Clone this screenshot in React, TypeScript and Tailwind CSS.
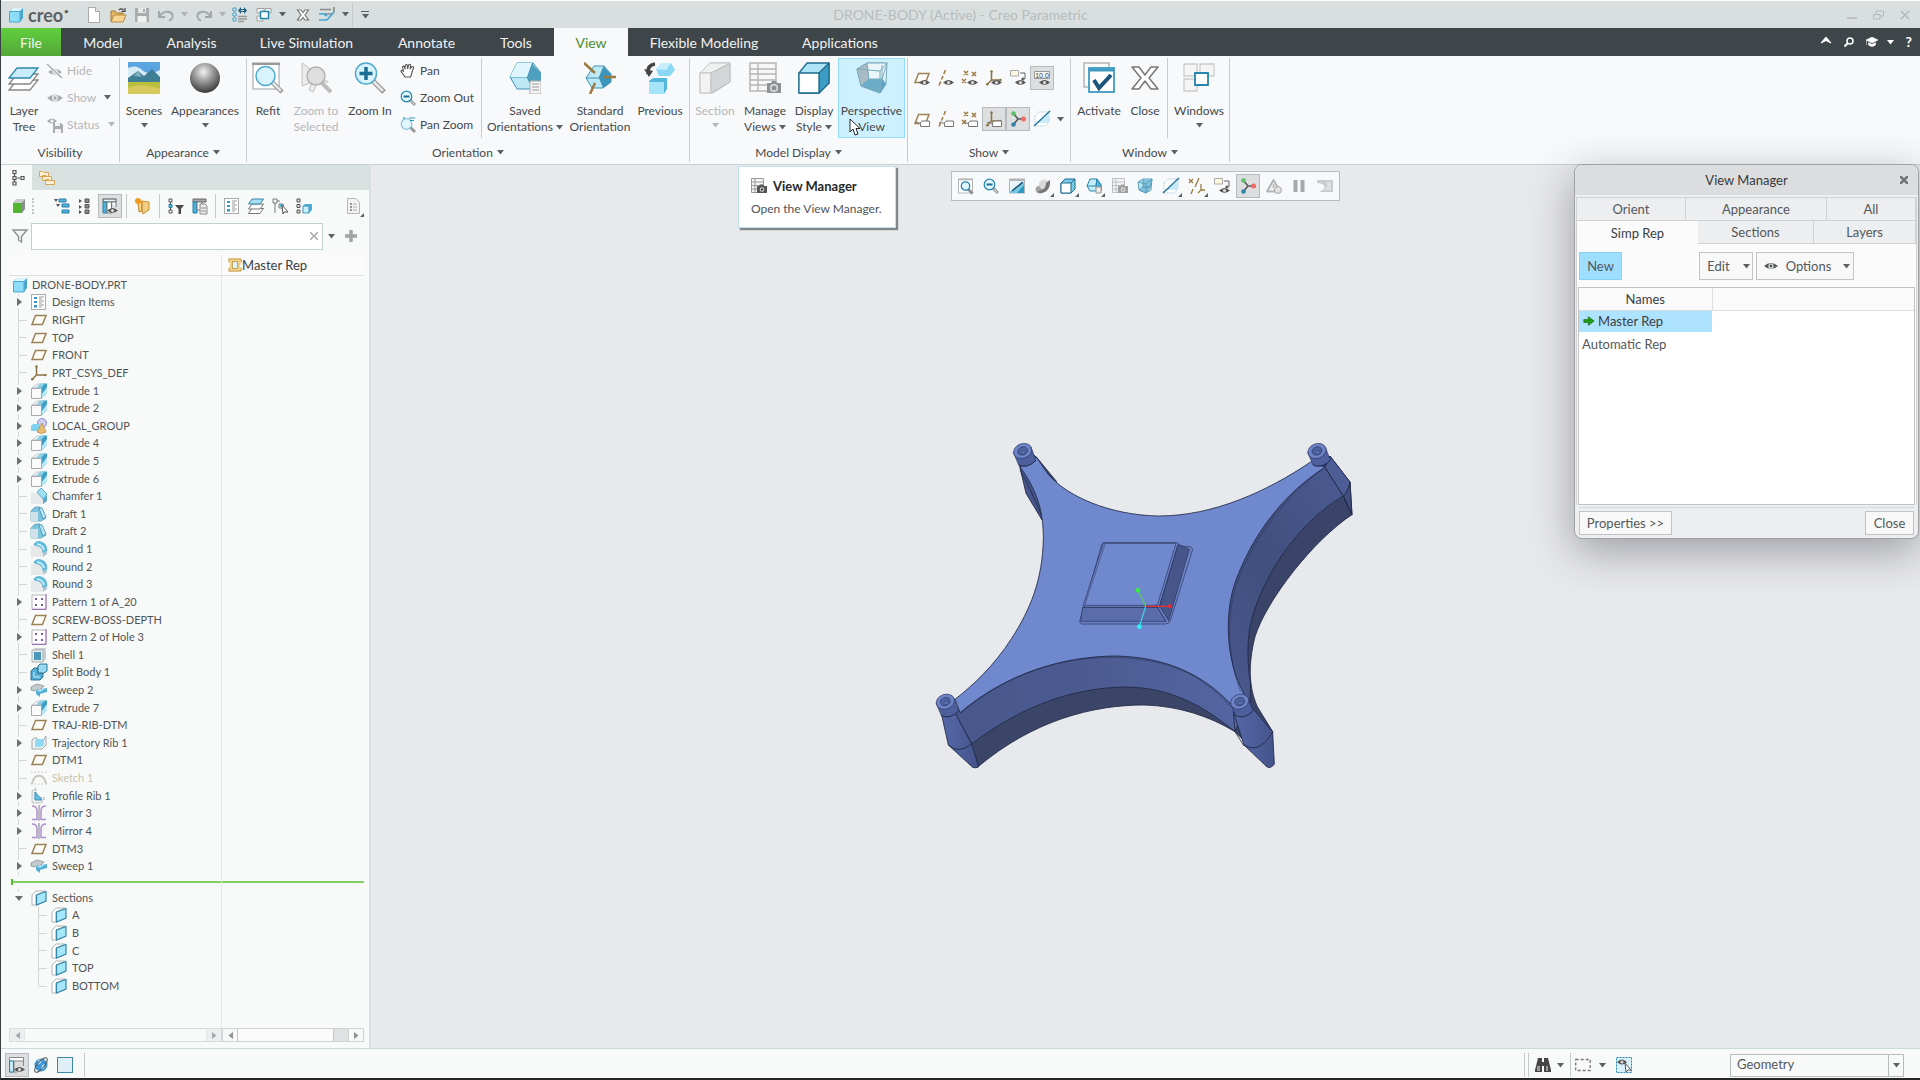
import React, { useState } from 'react';

const small: Record<string, React.ReactNode> = {
  eye: <g><path d="M0 8Q8 1 16 8Q8 15 0 8Z" fill="currentColor" /><circle cx="8" cy="8" r="3" fill="#eceded" /><circle cx="8" cy="8" r="1.7" fill="currentColor" /></g>,
  eyeOff: <g><path d="M1 9Q8 3 15 9Q8 15 1 9Z" fill="currentColor" /><circle cx="8" cy="9" r="2.6" fill="#eceded" /><circle cx="8" cy="9" r="1.5" fill="currentColor" /><path d="M0 1L15 15" stroke="#f8f9fb" strokeWidth="3" /><path d="M0 1L15 15" stroke="currentColor" strokeWidth="1.4" /></g>,
  status: <g><path d="M0 4Q5 -1 10 4Q5 9 0 4Z" fill="currentColor" /><circle cx="5" cy="4" r="1.6" fill="#f4f4f4" /><path d="M6 6H14L16 8V16H6Z" fill="currentColor" /><path d="M8 6H13V9H8ZM8 12H14V16H8Z" fill="#f2f2f2" /></g>,
  hand: <g fill="#fff" stroke="#555" strokeWidth="1.1" strokeLinejoin="round"><path d="M5 14C4 12 2 10 1 8.5C1 7 2.500 7 3.500 8.500L2.500 4C3 2.600 4.200 3 4.500 4.200L5 6L5.300 2.300C6 1 7.300 1.300 7.300 2.600L7.600 5.600L8.800 1.800C9.800 1 10.800 1.600 10.600 2.900L10 6L12 3.600C13 3.200 13.900 4 13.400 5.200L12 9C12 11 11 12 10.500 14Z" /></g>,
  zoomOut: <g><path d="M10 10L15 15" stroke="#999" strokeWidth="3" /><path d="M10 10L14.500 14.500" stroke="#e4e4e4" strokeWidth="1" /><circle cx="6.500" cy="6.500" r="5.300" fill="#e2f5fc" stroke="#2486ad" strokeWidth="1.200" /><path d="M3.500 6.500H9.500" stroke="#1b6c92" strokeWidth="2" /></g>,
  panZoom: <g><path d="M10 10L15 15" stroke="#999" strokeWidth="3" /><circle cx="6.500" cy="7" r="5.300" fill="#e2f5fc" stroke="#8bc3da" strokeWidth="1.200" /><path d="M9 1H15M10 3.500H14M4 0V2" stroke="#2596c4" strokeWidth="1.200" /></g>,
  refit: <g><rect x="0.500" y="1" width="14" height="14" fill="#fff" stroke="#b4b7b9" /><path d="M0 1.500H15" stroke="#b4b7b9" strokeWidth="1.500" /><path d="M10 11L14.500 15.500" stroke="#888" strokeWidth="2.600" /><circle cx="7.500" cy="8" r="4.200" fill="#e2f5fc" stroke="#2486ad" strokeWidth="1.300" /></g>,
  newDoc: <g><path d="M2.500 0.500H9.500L13.500 4.500V15.500H2.500Z" fill="#fff" stroke="#a9a9a9" /><path d="M9.500 0.500V4.500H13.500" fill="#e6e6e6" stroke="#a9a9a9" /></g>,
  open: <g><path d="M1 14V4H5L6.500 6H13V14Z" fill="#e3b566" stroke="#a97a2b" /><path d="M1 15L4 8H16L13 15Z" fill="#f6d493" stroke="#b98a3c" /><path d="M9 3C11 1 13 2 13.500 3.500M15 1V4.500H11.500" fill="none" stroke="#444" strokeWidth="1.200" /></g>,
  save: <g><path d="M1 1H15V15H1Z" fill="#a9acac" /><path d="M4 1H12V6H4Z" fill="#e6e8e8" /><path d="M3.500 9H12.500V15H3.500Z" fill="#eff0f0" /><path d="M9 2H11V5H9Z" fill="#a9acac" /></g>,
  undo: <path d="M1 4V10H7M1.500 9.500C5 3.500 13 3.500 14.500 8C15 11 13 13 11 13.500" fill="none" stroke="#a4a8a8" strokeWidth="2" />,
  redo: <path d="M15 4V10H9M14.500 9.500C11 3.500 3 3.500 1.500 8C1 11 3 13 5 13.500" fill="none" stroke="#a4a8a8" strokeWidth="2" />,
  regen: <g><path d="M1 1H4V4H1ZM1 6H4V9H1ZM1 11H4V14H1Z" fill="#e4f5fb" stroke="#3c9cc3" /><path d="M6 9.500H15M6 12H15M6 14.500H12" stroke="#9a9c9c" strokeWidth="1.400" /><path d="M6 3.500L9 0V7ZM15 3.500L12 0V7Z" fill="#24607f" /><path d="M9 2.500H12M9 4.500H12" stroke="#24607f" /></g>,
  windows: <g><path d="M1 1.500H8V6H1ZM9 1.500H15V6H9ZM1 9H7V14H1Z" fill="#f2f4f4" stroke="#9ea2a2" /><rect x="4.500" y="4.500" width="8" height="7" fill="#fff" stroke="#2486ad" strokeWidth="1.500" /></g>,
  closeX: <path d="M2.500 3H6L8 5.500L10 3H13.500L10 8L13.500 13H10L8 10.500L6 13H2.500L6 8Z" fill="#fff" stroke="#777" strokeWidth="1.200" />,
  settings: <g><path d="M1 2.500H12M5 7H14" stroke="#888" strokeWidth="1.600" /><path d="M0 7H5L8 9M0 13H8L15 5" fill="none" stroke="#3fa7dc" strokeWidth="1.700" /><path d="M15 0V5" stroke="#888" strokeWidth="1.600" /></g>,
  plane: <path d="M4.500 3.500H15L11.500 12.500H1Z" fill="#fdfcf8" stroke="#9b8256" strokeWidth="1.500" />,
  axisDash: <path d="M7.500 0L5.800 4M5 6L3.500 9.500M2.700 11.500L1 15.500" stroke="#9b7a3c" strokeWidth="1.500" />,
  points: <path d="M2 1L6 5M6 1L2 5M10 2L14 6M14 2L10 6M0 9L4 13M4 9L0 13" stroke="#9b7a3c" strokeWidth="1.500" />,
  csys: <g><path d="M5.500 1V10H15M5.500 10L1 14.500" fill="none" stroke="#8b7146" strokeWidth="1.500" /><circle cx="5.500" cy="1.500" r="1.200" fill="#8b7146" /><circle cx="14.500" cy="10" r="1.200" fill="#8b7146" /><circle cx="1.300" cy="14.300" r="1.300" fill="#8b7146" /></g>,
  note: <g><path d="M0.500 0.500H8.500V6H0.500Z" fill="#fff7de" stroke="#a9a9a9" /><path d="M10 3H15V9L12 9" fill="none" stroke="#666" /><path d="M13.500 7L11 9L13.500 11Z" fill="#444" /></g>,
  dim: <g><path d="M0.500 1.500H15.500V8.500H0.500Z" fill="#f4f4f4" stroke="#999" /></g>,
  rotor: <g stroke="#555" strokeWidth="1.500"><path d="M3.500 2.500L8 8L3.500 13.500M8 8H13" fill="none" /><circle cx="3.500" cy="2.500" r="2.300" fill="#5cc067" stroke="none" /><circle cx="3.500" cy="13.500" r="2.300" fill="#2f83ad" stroke="none" /><circle cx="13.500" cy="8" r="2.500" fill="#f26964" stroke="none" /></g>,
  sectionCut: <g><path d="M1 5L5 1H15V11L11 15H1Z" fill="#fff" stroke="#a9cfdf" strokeDasharray="1.500 1" /><path d="M3 12H15V3Z" fill="#c8e9f6" /><path d="M0 15L16 0" stroke="#2678a0" strokeWidth="1.500" /></g>,
  shade: <g><rect x="0.500" y="1" width="15" height="14" fill="#e8f6fc" stroke="#b2b6b8" /><path d="M1 15V13C6 13 11 8 11 5H15V15Z" fill="#7cc7e4" /><path d="M8 15L15 7V15Z" fill="#2b9ac6" /><path d="M0 2H16" stroke="#b2b6b8" strokeWidth="2" /><path d="M3 13L14 4" stroke="#124e6b" strokeWidth="1.600" /></g>,
  spheres: <g><ellipse cx="5" cy="11.500" rx="4.500" ry="4" fill="#a2a2a2" /><circle cx="9" cy="6.500" r="5" fill="#dadada" /><path d="M3 13C8 13 11 10 11 5L15 2C16 10 11 16 4 15Z" fill="#747474" /></g>,
  box: <g stroke="#1d6a8d" strokeLinejoin="round"><path d="M1 5L5 1H15V11L11 15H1Z" fill="#7ccbe8" /><path d="M1 5H11V15H1Z" fill="#fff" /><path d="M11 5L15 1" /></g>,
  houseBox: <g stroke="#2486ad" strokeLinejoin="round"><path d="M4 1H11L15 7V13H4L1 8Z" fill="#c5ebf8" /><path d="M1 8H10L11 1" fill="none" /><path d="M11 1L15 7V13H11L10 8Z" fill="#5ab4d8" /><path d="M10 9H15V15H10Z" fill="#eee" stroke="#999" /></g>,
  viewMgr: <g><path d="M0.500 0.500H12.500V14.500H0.500Z" fill="#f6f6f6" stroke="#999" /><path d="M0 4H13M0 7.500H13M0 11H13M4 0V15" stroke="#999" /><path d="M6 8H8L9 6.500H12L13 8H16V15H6Z" fill="#555" /><circle cx="11" cy="11.500" r="2.200" fill="#ddd" /><circle cx="11" cy="11.500" r="1.200" fill="#444" /></g>,
  viewMgrPale: <g><path d="M0.500 0.500H12.500V14.500H0.500Z" fill="#f6f6f6" stroke="#bdbfc1" /><path d="M0 4H13M0 7.500H13M0 11H13M4 0V15" stroke="#bdbfc1" /><path d="M6 8H8L9 6.500H12L13 8H16V15H6Z" fill="#9ea0a2" /><circle cx="11" cy="11.500" r="2.200" fill="#e6e6e6" /><circle cx="11" cy="11.500" r="1.200" fill="#9ea0a2" /></g>,
  persp: <g stroke="#5b9fba" strokeLinejoin="round"><path d="M1 4L6 1H15L14 12L9 15L2 12Z" fill="#bfe5f3" /><path d="M6 1V9H13L15 1M6 9L2 12L9 15L13 9Z" fill="#7fc3dd" /><path d="M1 4L9 6V15M9 6L15 1" fill="none" /></g>,
  datums: <g fill="none" stroke="#9b7a3c" strokeWidth="1.300"><path d="M0 1L4 5M4 1L0 5M10 0L6 9M4 11L2 16M12 6V12H16M12 12L9 15" /></g>,
  warn: <g><path d="M7.500 2L14 13.500H1Z" fill="#eee" stroke="#b3b5b6" strokeWidth="2" strokeLinejoin="round" /><path d="M7.500 6V10" stroke="#b3b5b6" strokeWidth="1.500" /><circle cx="12" cy="12" r="3.500" fill="#e2e2e2" stroke="#a3a5a6" /></g>,
  pause: <path d="M2.500 2H6.500V14H2.500ZM9.500 2H13.500V14H9.500Z" fill="#a6a9aa" />,
  spin: <g><path d="M0 2H16V14H2L7 11C9 8 6 5 0 5Z" fill="#c9cbcc" /><path d="M9 4H14V12H7Q12 8 9 4Z" fill="#e0e1e2" /></g>,
  treeTab: <g fill="none" stroke="#555" strokeWidth="1.200"><path d="M3 0.500H6V3.500H3ZM3 6.500H6V9.500H3ZM3 12H6V15H3ZM11 6.500H14V9.500H11ZM4.500 4V6M4.500 10V12M7 8H10" /></g>,
  folders: <g fill="#fdf0d4" stroke="#d5a558"><path d="M0.500 1.500H4L5 2.500H9.500V6.500H0.500ZM3.500 5.500H7L8 6.500H12.500V10.500H3.500ZM6.500 9.500H10L11 10.500H15.500V14.500H6.500Z" /></g>,
  greenCube: <g><path d="M2 5L6 1H14V11L11 15V5Z" fill="#8a8f92" /><path d="M2 5H11V15H2Z" fill="#56b530" /><path d="M6 1H14L11 5H2Z" fill="#c9cccd" /></g>,
  collapse: <g><path d="M0 1H4L2 4ZM2 6H6L4 9Z" fill="#555" /><path d="M5 1H12V4H5ZM8 6H15V9H8ZM8 12H15V15H8Z" fill="#52b2dc" stroke="#2a7fa5" /></g>,
  expandList: <g><path d="M1 1L4 3L1 5ZM1 7L4 9L1 11ZM1 12L4 14L1 16Z" fill="#555" /><path d="M7 1H11V4.500H7ZM7 6.500H11V10H7ZM7 12H11V15.500H7Z" fill="#888" stroke="#555" /></g>,
  columns: <g><path d="M1 1H14V4H1Z" fill="#dff3fb" stroke="#555" /><path d="M1 4H5V15H1Z" fill="#4bb2dd" stroke="#2a7fa5" /><path d="M5 4H9.500V15H5ZM9.500 4H14V9" fill="#fff" stroke="#777" /></g>,
  newPart: <g><path d="M3 5L7 3V13L4 14ZM7 3L14 4V12L8 16L7 13Z" fill="#f3cd83" stroke="#c28e36" /><circle cx="3" cy="3" r="3" fill="#f39a1c" /></g>,
  treeFilter: <g><path d="M1 1H4V4H1ZM1 12H4V15H1ZM2.500 4V12" fill="none" stroke="#555" /><path d="M1 6.500H4V9.500H1Z" fill="#52b2dc" stroke="#2a7fa5" /><path d="M7 7H16L13 11V16H10.500V11Z" fill="#4a4a4a" /></g>,
  colPage: <g><path d="M1 1H14V4H1Z" fill="#aaa" stroke="#666" /><path d="M1 4H5V15H1Z" fill="#4bb2dd" stroke="#2a7fa5" /><path d="M5 4H10V12H5Z" fill="#fff" stroke="#777" /><path d="M8 6H13L15 8V16H8Z" fill="#eee" stroke="#888" /><path d="M9 10H14M9 13H14" stroke="#888" /></g>,
  design: <g><rect x="0.500" y="0.500" width="14" height="15" fill="#fff" stroke="#a9acae" /><path d="M3 3H6V5H3ZM3 7H6V9H3ZM3 11H6V13.500H3Z" fill="#3498cb" /><path d="M8 3H13M8 5H11M8 7H13M8 9H11M8 11H13M8 13H11" stroke="#999" /></g>,
  layers: <g fill="#fff" stroke="#777"><path d="M4 10.500H15.500L12 15.500H0.500Z" /><path d="M4 6H15.500L12 11H0.500Z" /><path d="M4 1H15.500L12 6H0.500Z" fill="#a9def2" stroke="#3586a8" /></g>,
  treeCursor: <g><path d="M1 1H5V5H1ZM3 5V15M5 3H8M7 6H11V10H7Z" fill="none" stroke="#777" /><path d="M8 6H12V9H8Z" fill="#52b2dc" /><path d="M10 7L16 14H12L11 16Z" fill="#fff" stroke="#555" /></g>,
  treeBox: <g><path d="M1 1H4V4H1ZM1 6.500H4V9.500H1ZM1 12H4V15H1Z" fill="#ddd" stroke="#555" /><path d="M7 8L9 6H16V12L13 15H7Z" fill="#49aedb" /><path d="M7 8H13V15H7Z" fill="#c9effc" stroke="#3b95bb" /></g>,
  page: <g><path d="M2.500 0.500H10.500L14.500 4V15.500H2.500Z" fill="#f3f3f3" stroke="#b5b8b9" /><path d="M5 6H7M5 9H7M5 12H7" stroke="#999" strokeWidth="2" /><path d="M8 6H12M8 9H12M8 12H12" stroke="#b0b0b0" /></g>,
  funnel: <path d="M1 2H15L9.500 8.500V14L6.500 12V8.500Z" fill="#f3f4f4" stroke="#8d9192" strokeWidth="1.400" />,
  rep: <g><path d="M1 1H15V15H1Z" fill="#f3d28a" stroke="#bf933f" /><path d="M5 4H11V12H5Z" fill="#dff4fc" stroke="#bf933f" /><path d="M0 5H2V11H0ZM14 5H16V11H14Z" fill="#fff" /></g>,
  part: <g><path d="M2 4L5 1H15V11L12 15H2Z" fill="#49a6cf" /><path d="M2 4L5 1H15L12 4Z" fill="#daf5fd" /><path d="M1.500 4.500H12V15H1.500Z" fill="#8ddcf8" stroke="#4ea9cd" /></g>,
  extrude: <g><path d="M1 5L6 1H10L8 5Z" fill="#eef0f1" stroke="#b5b8ba" strokeWidth="0.700" /><path d="M8 5L11 0.500H16V10L11 15V6Z" fill="#3f9ec6" /><path d="M5 5L9 0.500H14L10 5Z" fill="#8fcfe7" /><path d="M11 15L16 10V4L11 11Z" fill="#b8e7f6" /><path d="M0.500 5.500H10.500V15.500H0.500Z" fill="#fafafa" stroke="#a8abad" /></g>,
  group: <g><circle cx="11" cy="5" r="4.500" fill="#cfcff2" stroke="#8d8ccb" /><path d="M0 8L2 6H9V13H0Z" fill="#7fd3f2" /><path d="M11 5L15 14Q10.500 17 6 14Z" fill="#e9bd74" stroke="#b78a45" strokeWidth="0.700" /></g>,
  chamfer: <g><path d="M0 5H7L12 11V16H0Z" fill="#e6e8e9" /><path d="M6 4L10 0L16 6L12 11Z" fill="#9fe0f7" stroke="#3fa0c5" strokeWidth="0.800" /><path d="M12 11L16 7V13L12 16Z" fill="#5aa9c7" /></g>,
  draft: <g><path d="M0 5L4 1H9L15 12L10 15H0Z" fill="#7ec4df" stroke="#589fb9" strokeWidth="0.800" /><path d="M0 6H7V15H0Z" fill="#cfe2ea" /><path d="M8 2L11 2L15 11L12 13Z" fill="#bceaf9" stroke="#3a8eb0" strokeWidth="0.800" /></g>,
  round: <g><path d="M0 5H6Q12 7 12 13V16H0Z" fill="#e6e8e9" /><path d="M3 3Q5 0 8 0.500Q16 1 16 10L12 12Q12 5 3 4Z" fill="#62bfe2" stroke="#4a9cba" strokeWidth="0.600" /><path d="M6 3Q12 4 13 9" stroke="#d7f3fc" strokeWidth="1.500" fill="none" /><path d="M12 12L16 10V13L12 16Z" fill="#a9c6d2" /></g>,
  pattern: <g><path d="M1 1H15V15H1Z" fill="#fff" stroke="#b5b5bd" /><path d="M15 0V15.500H1" fill="none" stroke="#9a6cc0" /><path d="M4 4H6V6H4ZM10 4H12V6H10ZM4 10H6V12H4ZM10 10H12V12H10Z" fill="#8556b0" /></g>,
  shell: <g><path d="M1 4L4 1H15V12L12 15H1Z" fill="#c6ced1" /><path d="M1 3H12V15H1Z" fill="#e9ecee" stroke="#aab0b3" /><path d="M3 5H10V13H3Z" fill="#4a99ba" /></g>,
  split: <g stroke="#206a8c" strokeWidth="0.900"><path d="M0 7L3 4H7V9H12V13L9 16H0Z" fill="#53aed4" /><path d="M7 2L9 0H16V7L13 9H7Z" fill="#98d8f0" /><path d="M3 8V13H9" fill="none" stroke="#d6f2fb" /></g>,
  sweep: <g><path d="M0 5L6 2L13 4L10 7L3 9L0 8Z" fill="#c3c9cc" stroke="#888f92" strokeWidth="0.800" /><path d="M5 8L16 6V10L9 12V15L5 12Z" fill="#57b0d4" /><path d="M5 8L15 6L9 10Z" fill="#a8ddf0" /></g>,
  trib: <g><path d="M1 5L4 3H6V8L10 6H12L15 1V10L11 14H1Z" fill="#f3f4f4" stroke="#a2a5a7" /><path d="M4 6L6 4H13V10L10 12H4Z" fill="#8fdaf4" /></g>,
  sketch: <g stroke="#c0c3c4" fill="none"><path d="M1 14C3 3 13 3 15 14" strokeWidth="2" stroke="#c6c6bb" /><path d="M0 2H16M0 14H16" strokeDasharray="1.500 2" /></g>,
  prib: <g><path d="M1 3L5 0V9L14 10L10 15H1Z" fill="#eceeee" stroke="#adb0b2" strokeDasharray="2 1" /><path d="M4 4L11 12H4Z" fill="#62bfe5" stroke="#3893b8" /></g>,
  mirror: <g fill="none"><path d="M1 1Q6 1 6 6V14.500H1M15 1Q10 1 10 6V14.500H15" stroke="#b18dd0" strokeWidth="1.500" /><path d="M8 0V16" stroke="#b9bcbe" strokeWidth="2" /></g>,
  section: <g><path d="M1 5L5 1H14L5 5V15H1Z" fill="#fff" stroke="#a9abad" strokeWidth="0.900" /><path d="M5.500 5L15 1.500V11L5.500 15Z" fill="#a5e6fb" stroke="#3787a6" strokeWidth="1.200" /></g>,
  layoutBtn: <g><path d="M0.500 0.500H14.500V4H0.500ZM0.500 4V15H5V4M5 15H8M14.500 4V9" fill="#fff" stroke="#888" /><path d="M0.500 4H4.500V15H0.500Z" fill="#c6eaf8" stroke="#2486ad" /></g>,
  globe: <g><circle cx="8" cy="8" r="6.500" fill="#3c95d6" /><path d="M5 3L9 2L8 6L5 8ZM9 8L13 7L11 12L8 13Z" fill="#a9dcf6" /><ellipse cx="8" cy="8" rx="9" ry="3.500" transform="rotate(-50 8 8)" fill="none" stroke="#555" /></g>,
  blank: <rect x="0.500" y="0.500" width="15" height="15" fill="#e0eef5" stroke="#3d87a7" />,
  find: <g fill="#454545"><path d="M3 1H7V5H9V1H13L16 13V15H9V9H7V15H0V13Z" /><path d="M2 9H5V14H2ZM11 9H13V14H11Z" fill="#999" /></g>,
  marquee: <rect x="0.700" y="2.500" width="14.500" height="11" fill="none" stroke="#777" strokeWidth="1.300" strokeDasharray="3 2" />,
  pick: <g><rect x="0.500" y="0.500" width="15" height="15" fill="#d9f1fa" stroke="#2486ad" strokeDasharray="2 1" /><path d="M1 5Q6 0 11 5Q6 10 1 5Z" fill="#555" /><circle cx="6" cy="5" r="1.500" fill="#ddd" /><path d="M9 6L15 13H12L10 15Z" fill="#fff" stroke="#555" /></g>,
  arrow: <path d="M1 6H7V2L15 8L7 14V10H1Z" fill="#1f9a18" stroke="#1d5c10" strokeWidth="0.700" />,
};

const miniEye = <g><path d="M5 12.500Q10.500 7.500 16 12.500Q10.500 17 5 12.500Z" fill="#555" /><circle cx="10.500" cy="12.500" r="1.600" fill="#ddd" /></g>;
const miniTag = <g fill="#fff" stroke="#777"><path d="M1 12Q3 10 5 12T8 12" fill="none" /><path d="M8 10H15.500V15.500H6.500V12Z" /></g>;

function Icon({ name, badge, className = "w-4 h-4" }: { name: string; badge?: 'eye' | 'tag'; className?: string }) {
  return (
    <svg viewBox="0 0 16 16" className={`${className} shrink-0 overflow-visible`} aria-hidden="true">
      {small[name]}
      {name === "dim" && <text x="8" y="7.500" fontSize="7" textAnchor="middle" fontFamily="Liberation Sans" fill="#444">10.0</text>}
      {badge === 'eye' && miniEye}
      {badge === 'tag' && miniTag}
    </svg>
  );
}

const large: Record<string, React.ReactNode> = {
  layerTree: <g fill="#fff" stroke="#888" strokeWidth="1.300"><path d="M9 18H30L22 28H1Z" /><path d="M9 12H30L22 22H1Z" /><path d="M9 6H30L22 16H1Z" fill="#c9ecf9" stroke="#3089ae" /></g>,
  scenes: <g><path d="M0 0H32V32H0Z" fill="#5aa5e0" /><path d="M0 6Q8 2 14 8T32 8V20H0Z" fill="#d8ecf6" /><path d="M0 16L10 9L16 14L24 7L32 15V21H0Z" fill="#3f7f95" /><path d="M6 14L10 9L14 15Z" fill="#7fb0c0" /><path d="M0 20H32V32H0Z" fill="#b9bf3c" /><path d="M0 26Q12 20 32 27V32H0Z" fill="#d8c95e" /></g>,
  ball: <circle cx="16" cy="16" r="15" fill="url(#ballShade)" />,
  refit: <g><rect x="1" y="1" width="26" height="26" fill="#fff" stroke="#b0b3b5" strokeWidth="1.300" /><path d="M0 2H28" stroke="#999" strokeWidth="2" /><path d="M19 19L30 30" stroke="#8e8e8e" strokeWidth="4.500" /><path d="M20 20L29 29" stroke="#e6e6e6" strokeWidth="2.500" /><circle cx="13.500" cy="14" r="9.500" fill="#d8f3fd" stroke="#4da9cd" strokeWidth="1.500" /></g>,
  zoomSel: <g><path d="M2 1L28 20H18L13 30L9 28L12 20L2 24Z" fill="#ebebeb" stroke="#c2c2c2" /><path d="M21 20L31 30" stroke="#bdbdbd" strokeWidth="4" /><circle cx="16" cy="14" r="9" fill="#dedede" stroke="#b3b3b3" strokeWidth="1.500" /></g>,
  zoomIn: <g><path d="M19 19L30 30" stroke="#8e8e8e" strokeWidth="5" /><path d="M19 19L29 29" stroke="#e6e6e6" strokeWidth="3" /><circle cx="12" cy="11.500" r="10.500" fill="#d8f3fd" stroke="#4da9cd" strokeWidth="1.400" /><path d="M12 5V18M5.500 11.500H18.500" stroke="#1a6d94" strokeWidth="3.500" /></g>,
  saved: <g strokeLinejoin="round"><path d="M1 15L8 1H24L32 11V22L24 27H8Z" fill="#bde8f6" stroke="#3e92b3" /><path d="M22 1L32 11V22L24 27L18 15Z" fill="#4f9fc0" /><path d="M1 15H18L24 1M18 15L24 27" fill="none" stroke="#3e92b3" /><path d="M1 15L8 1H23L18 15Z" fill="#e0f6fd" /><path d="M21 19H32V32H21Z" fill="#f4f4f4" stroke="#aaa" /><path d="M23 22H30M23 25H30M23 28H30" stroke="#999" /></g>,
  standard: <g strokeLinejoin="round"><path d="M2 16L10 4H20L27 12V20L19 26H8Z" fill="#bde8f6" stroke="#3e92b3" /><path d="M20 5L27 12V20L19 26L15 16Z" fill="#3c95bd" /><path d="M2 16H15L20 4" fill="none" stroke="#3e92b3" /><path d="M0 1L11 11M20 15H32M11 21L6 32" stroke="#9b7a3c" strokeWidth="2.500" /></g>,
  previous: <g><path d="M12 7L17 1H27L31 8L26 14H15Z" fill="#8bd8f5" /><path d="M12 7L17 1H27L22 8Z" fill="#c9eefb" /><path d="M5 19L9 16H23V27L20 32H5Z" fill="#55b7de" /><path d="M5 20H20V32H5Z" fill="#a5e4f9" /><path d="M11 2Q3 3 4 12" fill="none" stroke="#444" strokeWidth="3.500" /><path d="M0 7L5 15L9 9Z" fill="#444" /></g>,
  sectionBig: <g stroke="#c0c2c4" strokeLinejoin="round"><path d="M1 11L11 1H31V20L14 31H1Z" fill="#dadbdc" /><path d="M1 11L11 1H31L12 11Z" fill="#f0f1f1" /><path d="M1 11H12V31H1Z" fill="#f2f2f2" /><path d="M12 11L31 2V20L12 31Z" fill="#d4d5d6" /></g>,
  manage: <g><path d="M1 1H27V29H1Z" fill="#f7f7f7" stroke="#b5b5b5" strokeWidth="1.500" /><path d="M1 7H27M1 12H27M1 18H27M1 23H27M9 1V29" stroke="#b5b5b5" strokeWidth="1.400" /><path d="M18 21H22L23 19H27L28 21H32V31H18Z" fill="#8f9294" /><circle cx="25" cy="26" r="4" fill="#ddd" /><circle cx="25" cy="26" r="2.500" fill="#8f9294" /></g>,
  display: <g stroke="#1d6a8d" strokeWidth="1.300" strokeLinejoin="round"><path d="M1 11L9 1H31V21L21 31H1Z" fill="#aee3f6" /><path d="M21 11L31 1V21L21 31Z" fill="#3c9cc3" /><path d="M1 11H21V31H1Z" fill="#fff" /></g>,
  perspBig: <g strokeLinejoin="round" stroke="#78aabd"><path d="M1 7L11 1H31L30 22L24 31L5 24Z" fill="#dff0f6" /><path d="M11 1L13 17L5 24L1 7Z" fill="#a9bcc4" /><path d="M13 17H26L24 31L5 24Z" fill="#69aecb" /><path d="M26 17L30 22L24 31Z" fill="#5ba6c5" /><path d="M11 1H31L26 17H13Z" fill="#eaf6fa" /><path d="M31 1L24 9V31M1 7L24 9M26 3V17M15 18L10 26M19 18L15 28M22 18L20 29" fill="none" /></g>,
  activate: <g><rect x="1" y="1" width="25" height="24" fill="#fafafa" stroke="#b5b5b5" strokeWidth="1.500" /><rect x="6" y="6" width="25" height="24" fill="#fff" stroke="#3d9ac1" strokeWidth="1.800" /><path d="M6 8H31" stroke="#3d9ac1" strokeWidth="3" /><path d="M11 18L16 26L28 13" fill="none" stroke="#19557a" strokeWidth="4" /></g>,
  closeBig: <path d="M3 5H10L16 13L22 5H29L20 16L29 27H22L16 19L10 27H3L12 16Z" fill="#fff" stroke="#777" strokeWidth="1.500" strokeLinejoin="round" />,
  windowsBig: <g fill="#f5f5f6" stroke="#c9cbcd" strokeWidth="1.300"><path d="M1 2H14V14H1ZM17 2H31V14H17ZM1 17H14V29H1Z" /><path d="M12 11H25V23H12Z" fill="#fff" stroke="#2486ad" strokeWidth="1.800" /></g>,
};

function BigIcon({ name }: { name: string }) {
  return (
    <svg viewBox="0 0 32 32" className="w-8 h-8 shrink-0" aria-hidden="true">
      <defs>
        <radialGradient id="ballShade" cx="0.45" cy="0.3" r="0.7">
          <stop offset="0" stopColor="#f4f4f4" />
          <stop offset="0.45" stopColor="#9a9a9a" />
          <stop offset="1" stopColor="#3a3a3a" />
        </radialGradient>
      </defs>
      {large[name]}
    </svg>
  );
}

function Caret({ className = "text-[#5c6163]" }: { className?: string }) {
  return (
    <svg viewBox="0 0 7 5" className={`inline-block shrink-0 w-[7px] h-[5px] ${className}`} aria-hidden="true">
      <path d="M0 0H7L3.500 4.500Z" fill="currentColor" />
    </svg>
  );
}

type BigProps = { icon: string; lines: string[]; width: string; caret?: boolean; disabled?: boolean; active?: boolean; children?: React.ReactNode };

function BigButton({ icon, lines, width, caret, disabled, active, children }: BigProps) {
  return (
    <button
      type="button"
      disabled={disabled}
      className={`relative h-20 pt-[3px] flex flex-col items-center border text-center leading-4 whitespace-nowrap ${width} ${active ? "bg-[#cff0fe] border-[#8fdcfb]" : "border-transparent"} ${disabled ? "text-[#b4b7b9]" : ""}`}
    >
      <BigIcon name={icon} />
      <span className="mt-[9px]">{lines[0]}</span>
      {lines[1] && <span className="flex items-center gap-[3px]">{lines[1]}{caret && <Caret />}</span>}
      {!lines[1] && caret && <span className="h-3 flex items-center"><Caret className={disabled ? "text-[#b4b7b9]" : "text-[#5c6163]"} /></span>}
      {children}
    </button>
  );
}

function SmallButton({ icon, label, caret, disabled, darkCaret }: { icon: string; label: string; caret?: boolean; disabled?: boolean; darkCaret?: boolean }) {
  return (
    <button type="button" disabled={disabled} className={`h-[27px] flex items-center gap-1 whitespace-nowrap ${disabled ? "text-[#b4b7b9]" : ""}`}>
      <Icon name={icon} className={disabled ? "w-4 h-4 text-[#a9acae]" : "w-4 h-4"} />
      {label}
      {caret && <Caret className={darkCaret ? "ml-1 text-[#5c6163]" : "ml-1 text-[#b4b7b9]"} />}
    </button>
  );
}

function Group({ label, width, caret = true, children }: { label: string; width: string; caret?: boolean; children: React.ReactNode }) {
  return (
    <section aria-label={label} className={`shrink-0 flex flex-col border-r border-[#c9cbcd] my-[2px] ${width}`}>
      <div className="h-20 flex">{children}</div>
      <div className="flex-1 pt-[5px] flex items-center justify-center gap-1">{label}{caret && <Caret />}</div>
    </section>
  );
}

const tabs: [string, string][] = [
  ["File", "w-[60px]"],
  ["Model", "w-[84px]"],
  ["Analysis", "w-[93px]"],
  ["Live Simulation", "w-[137px]"],
  ["Annotate", "w-[103px]"],
  ["Tools", "w-[76px]"],
  ["View", "w-[74px]"],
  ["Flexible Modeling", "w-[152px]"],
  ["Applications", "w-[120px]"],
];

const showTop: [string, string, boolean][] = [
  ["plane", "Plane display", false],
  ["axisDash", "Axis display", false],
  ["points", "Point display", false],
  ["csys", "Csys display", false],
  ["note", "Annotation display", false],
  ["dim", "Dimension display", true],
];

const showBottom: [string, string, boolean][] = [
  ["plane", "Plane tag display", false],
  ["axisDash", "Axis tag display", false],
  ["points", "Point tag display", false],
  ["csys", "Csys tag display", true],
  ["rotor", "Spin center", true],
  ["sectionCut", "Section display", false],
];

const graphicTools: [string, string][] = [
  ["refit", "Refit"],
  ["zoomOut", "Zoom out"],
  ["shade", "Repaint"],
  ["spheres", "Rendering"],
  ["box", "Display style"],
  ["houseBox", "Saved orientations"],
  ["viewMgrPale", "View manager"],
  ["persp", "Perspective"],
  ["sectionCut", "Section"],
  ["datums", "Datum filters"],
  ["note", "Annotations"],
  ["rotor", "Spin center"],
  ["warn", "Simulation"],
  ["pause", "Pause"],
  ["spin", "Resume"],
];

const withMenu = ["spheres", "box", "houseBox", "sectionCut", "datums"];

type Node = { label: string; icon: string; open?: boolean; dim?: boolean };

const tree: Node[] = [
  { label: "Design Items", icon: "design", open: false },
  { label: "RIGHT", icon: "plane" },
  { label: "TOP", icon: "plane" },
  { label: "FRONT", icon: "plane" },
  { label: "PRT_CSYS_DEF", icon: "csys" },
  { label: "Extrude 1", icon: "extrude", open: false },
  { label: "Extrude 2", icon: "extrude", open: false },
  { label: "LOCAL_GROUP", icon: "group", open: false },
  { label: "Extrude 4", icon: "extrude", open: false },
  { label: "Extrude 5", icon: "extrude", open: false },
  { label: "Extrude 6", icon: "extrude", open: false },
  { label: "Chamfer 1", icon: "chamfer" },
  { label: "Draft 1", icon: "draft" },
  { label: "Draft 2", icon: "draft" },
  { label: "Round 1", icon: "round" },
  { label: "Round 2", icon: "round" },
  { label: "Round 3", icon: "round" },
  { label: "Pattern 1 of A_20", icon: "pattern", open: false },
  { label: "SCREW-BOSS-DEPTH", icon: "plane" },
  { label: "Pattern 2 of Hole 3", icon: "pattern", open: false },
  { label: "Shell 1", icon: "shell" },
  { label: "Split Body 1", icon: "split" },
  { label: "Sweep 2", icon: "sweep", open: false },
  { label: "Extrude 7", icon: "extrude", open: false },
  { label: "TRAJ-RIB-DTM", icon: "plane" },
  { label: "Trajectory Rib 1", icon: "trib", open: false },
  { label: "DTM1", icon: "plane" },
  { label: "Sketch 1", icon: "sketch", dim: true },
  { label: "Profile Rib 1", icon: "prib", open: false },
  { label: "Mirror 3", icon: "mirror", open: false },
  { label: "Mirror 4", icon: "mirror", open: false },
  { label: "DTM3", icon: "plane" },
  { label: "Sweep 1", icon: "sweep", open: false },
];

const sections = ["A", "B", "C", "TOP", "BOTTOM"];

function TreeRow({ label, icon, open, dim, nested, last }: Node & { nested?: boolean; last?: boolean }) {
  const expandable = open !== undefined;
  return (
    <li className={`flex items-center min-h-0 ${nested ? "pl-[21px]" : "pl-[1px]"}`}>
      <span className="relative w-[21px] self-stretch shrink-0 flex items-center">
        <span className={`w-[9px] border-r border-[#d3d6d7] ${last ? "h-1/2 self-start" : "h-full"}`}></span>
        {!expandable && <span className="w-2 h-px bg-[#d3d6d7]"></span>}
        {expandable && (
          <button type="button" aria-label={`Toggle ${label}`} className="absolute left-[6px] py-[2px] bg-[#f8faf9]">
            <svg viewBox="0 0 6 8" className={`w-[6px] h-2 ${open ? "rotate-90" : ""}`}><path d="M1 0L6 4L1 8Z" fill="#6a6e70" /></svg>
          </button>
        )}
      </span>
      <Icon name={icon} />
      <span className={`ml-[5px] whitespace-nowrap ${dim ? "text-[#c9c4ae]" : ""}`}>{label}</span>
    </li>
  );
}

function ToolButton({ icon, label, active, badge, menu }: { icon: string; label: string; active?: boolean; badge?: 'eye' | 'tag'; menu?: boolean }) {
  return (
    <button type="button" aria-label={label} className={`relative w-6 h-6 flex items-center justify-center shrink-0 border ${active ? "bg-[#dcdee0] border-[#b7babc]" : "border-transparent"}`}>
      <Icon name={icon} badge={badge} />
      {menu && <svg viewBox="0 0 4 4" className="absolute right-0 bottom-0 w-1 h-1" aria-hidden="true"><path d="M4 0V4H0Z" fill="#5c6163" /></svg>}
    </button>
  );
}

function Rule() {
  return <span className="w-px h-6 bg-[#c6c9ca] shrink-0"></span>;
}

function ModelTree() {
  const [filter, setFilter] = useState("");

  return (
    <aside className="w-[370px] shrink-0 flex flex-col bg-[#f8faf9] border-r-2 border-[#d9e0e0]">
      <div className="h-[25px] flex bg-[#d9e0e0]">
        <button type="button" aria-label="Model tree" className="w-[31px] bg-[#f8faf9] pl-[9px]"><Icon name="treeTab" /></button>
        <button type="button" aria-label="Folder browser" className="w-8 pl-[7px]"><Icon name="folders" /></button>
      </div>

      <div className="h-8 flex items-center pl-[6px] pr-1">
        <ToolButton icon="greenCube" label="Model" />
        <span className="w-[3px] h-4 ml-px mr-[15px] border-l-2 border-dotted border-[#c3c6c7]"></span>
        <ToolButton icon="collapse" label="Collapse" />
        <ToolButton icon="expandList" label="Expand" />
        <ToolButton icon="columns" label="Tree columns" active badge="eye" />
        <span className="w-1"></span>
        <Rule />
        <span className="w-1"></span>
        <ToolButton icon="newPart" label="New" />
        <span className="w-1"></span>
        <Rule />
        <span className="w-1"></span>
        <ToolButton icon="treeFilter" label="Tree filters" />
        <ToolButton icon="colPage" label="Column settings" />
        <span className="w-[3px]"></span>
        <Rule />
        <span className="w-1"></span>
        <ToolButton icon="design" label="Design items" />
        <ToolButton icon="layers" label="Layers" />
        <ToolButton icon="treeCursor" label="Select in tree" />
        <ToolButton icon="treeBox" label="Bodies" />
        <span className="ml-auto"><ToolButton icon="page" label="Settings" menu /></span>
      </div>

      <div className="h-[30px] flex items-center pb-[2px] pl-[11px] pr-3">
        <Icon name="funnel" />
        <div className="relative ml-[3px]">
          <input
            type="text"
            aria-label="Filter tree"
            value={filter}
            onChange={e => setFilter(e.target.value)}
            className="block w-[292px] h-[27px] px-2 text-xs bg-white border border-[#c0cfd0] focus:outline-none"
          />
          <button type="button" aria-label="Clear filter" onClick={() => setFilter("")} className="absolute right-[5px] top-[9px]">
            <svg viewBox="0 0 8 8" className="w-2 h-2"><path d="M0 0L8 8M8 0L0 8" stroke="#a5a9aa" strokeWidth="1.500" /></svg>
          </button>
        </div>
        <button type="button" aria-label="Filter options" className="ml-[5px] flex"><Caret /></button>
        <button type="button" aria-label="Add filter" className="ml-auto">
          <svg viewBox="0 0 12 12" className="w-3 h-3"><path d="M6 0V12M0 6H12" stroke="#a1a5a6" strokeWidth="3.500" /></svg>
        </button>
      </div>

      <div className="relative flex-1 flex flex-col mt-[3px] ml-2 mr-[5px] mb-[6px] text-[11px] leading-4 text-[#505456]">
        <div className="h-[21px] flex items-center border-b border-[#dcdfdf] bg-[#fbfbfb] text-[13px] text-[#3c4042]">
          <span className="ml-[219px] flex items-center"><Icon name="rep" className="w-[14px] h-[14px]" />Master Rep</span>
        </div>
        <ul className="h-[599px] grid auto-rows-fr">
          <li className="flex items-center pl-[3px] min-h-0"><Icon name="part" /><span className="ml-1">DRONE-BODY.PRT</span></li>
          {tree.map(n => <TreeRow key={n.label} {...n} />)}
        </ul>
        <div className="h-[14px] ml-[2px] flex items-center">
          <span className="w-0.5 h-1.5 bg-[#55c02f]"></span>
          <span className="flex-1 h-[2px] bg-[#82cf66]"></span>
        </div>
        <ul className="h-[106px] grid auto-rows-fr">
          <TreeRow label="Sections" icon="section" open last />
          {sections.map((s, i) => <TreeRow key={s} label={s} icon="section" nested last={i === sections.length - 1} />)}
        </ul>
        <span className="absolute top-0 bottom-[14px] left-[212px] w-px bg-[#e3e8ea]"></span>
        <div className="mt-auto h-[14px] flex text-[#a8abad]">
          <div className="w-[213px] border border-[#d9dcdd] flex">
            <button type="button" aria-label="Scroll left" className="w-[14px] flex items-center justify-center bg-[#eceeef]"><Caret className="rotate-90" /></button>
            <span className="flex-1 border-x border-[#e4e6e7]"></span>
            <button type="button" aria-label="Scroll right" className="w-[14px] flex items-center justify-center bg-[#eceeef]"><Caret className="-rotate-90" /></button>
          </div>
          <div className="flex-1 border border-[#d0d3d4] flex">
            <button type="button" aria-label="Scroll left" className="w-[14px] flex items-center justify-center"><Caret className="rotate-90 text-[#8d9193]" /></button>
            <span className="w-[97px] border-x border-[#c4c7c8] bg-[#fafafb]"></span>
            <span className="flex-1 bg-[#dfe1e2] border-r border-[#d0d3d4]"></span>
            <button type="button" aria-label="Scroll right" className="w-[14px] flex items-center justify-center"><Caret className="-rotate-90 text-[#8d9193]" /></button>
          </div>
        </div>
      </div>
    </aside>
  );
}

function Boss({ x, y }: { x: number; y: number }) {
  return (
    <g transform={`translate(${x} ${y})`} stroke="#28325a" strokeWidth="1.800">
      <path d="M-28 4L-12 42Q14 54 40 28L25 -12Z" fill="#4d5f9c" />
      <path d="M-12 42Q14 54 40 28" fill="none" strokeWidth="3" />
      <ellipse cx="0" cy="0" rx="28" ry="22" transform="rotate(-20)" fill="#6c83c8" />
      <ellipse cx="0" cy="0" rx="15" ry="12" transform="rotate(-20)" fill="#4f639f" />
      <ellipse cx="2" cy="4" rx="7" ry="5" fill="#5d74b4" strokeWidth="1" />
    </g>
  );
}

function Drone() {
  return (
    <svg viewBox="0 0 1350 1110" className="absolute left-[549px] top-[255px] w-[450px] h-[370px]" role="img" aria-label="DRONE-BODY model">
      <defs>
        <linearGradient id="sideRight" x1="1" y1="0" x2="0" y2="1">
          <stop offset="0" stopColor="#4b5b92" />
          <stop offset="0.5" stopColor="#414f7e" />
          <stop offset="1" stopColor="#4a5a91" />
        </linearGradient>
        <linearGradient id="sideFront" x1="0" y1="0" x2="1" y2="0">
          <stop offset="0" stopColor="#48588c" />
          <stop offset="0.45" stopColor="#4b5b91" />
          <stop offset="1" stopColor="#5466a2" />
        </linearGradient>
        <linearGradient id="leg" x1="0" y1="0" x2="1" y2="0">
          <stop offset="0" stopColor="#5568a8" />
          <stop offset="1" stopColor="#44538a" />
        </linearGradient>
      </defs>
      <g stroke="#1f2742" strokeWidth="2.500" strokeLinejoin="round">
        <path d="M298 135L318 220L366 300L372 230L330 130Z" fill="#46568c" />
        <path d="M300 150Q330 200 366 290" fill="none" />
        <path d="M335 100L350 112L410 185L360 150Z" fill="#394569" />

        <path d="M1230 108L1290 186L1296 284C1180 360 1040 540 1005 650C985 730 985 800 1012 860L1058 935L970 850L900 600L1100 205L1195 135Z" fill="#3a4468" />
        <path d="M1215 142L1270 228C1130 310 1020 480 990 620C980 680 983 740 992 790L990 850L960 820L880 600L900 480L1100 205L1195 135Z" fill="url(#sideRight)" />
        <path d="M1230 108L1290 186Q1286 212 1270 228L1215 142Z" fill="#4d5e97" />
        <path d="M1290 186L1296 284L1270 228Q1286 212 1290 186Z" fill="#414f80" />
        <path d="M1270 228L1296 284" />

        <path d="M105 880L155 972L172 1042C340 900 520 855 672 855C780 858 870 890 945 935L985 975L930 850L600 700Z" fill="#3a4568" />
        <path d="M105 880L155 972C300 860 460 802 620 801C760 803 860 865 945 935L960 900L930 850C800 640 430 640 125 845Z" fill="url(#sideFront)" />
        <path d="M65 885L85 975L158 1042Q168 1046 176 1040L155 972L105 878Z" fill="url(#leg)" />
        <path d="M85 975Q115 1004 155 972" fill="none" />
        <path d="M940 875L972 975L1040 1040Q1052 1048 1063 1032L1058 935L998 865Z" fill="url(#leg)" />
        <path d="M972 975Q1020 1004 1058 935" fill="none" />
        <path d="M940 875L945 935L972 978" fill="none" />

        <path d="M300 140C350 210 370 270 370 355C368 480 330 570 275 655C220 740 160 795 105 838L120 878C260 760 430 708 590 708C740 712 850 765 930 850L972 822C915 720 912 570 950 475C1005 330 1100 215 1215 142L1175 124C1040 215 880 288 715 288C570 285 440 230 382 160L350 112Z" fill="#7088cd" />
        <path d="M120 882C260 758 430 710 590 712C745 716 855 770 928 857M962 815C920 710 918 570 956 475C1010 340 1100 224 1208 147" fill="none" strokeWidth="1.200" />
      </g>

      <g stroke="#28325a" strokeWidth="2" strokeLinejoin="round">
        <path d="M550 368H770L785 378L808 380Q820 382 817 392L750 605Q745 612 735 612H485Q477 610 480 600L545 375Z" fill="#6b82c5" />
        <path d="M550 370H768L712 556H490Z" fill="#7088cd" />
        <path d="M488 562H712L738 604H482Z" fill="#5a6daa" />
        <path d="M774 374L808 388L746 602L718 558Z" fill="#46558a" />
        <path d="M488 562H718L774 374M495 553L556 370M708 553L738 604" fill="none" strokeWidth="1.500" />
      </g>

      <Boss x={308} y={93} />
      <Boss x={1191} y={93} />
      <Boss x={76} y={845} />
      <Boss x={959} y={845} />

      <g strokeWidth="4">
        <path d="M677 559L654 511" stroke="#55c868" /><circle cx="654" cy="511" r="7" fill="#35ee42" />
        <path d="M677 559H750" stroke="#e5303b" /><circle cx="750" cy="559" r="6" fill="#f02733" />
        <path d="M677 559L658 620" stroke="#45cfe2" /><circle cx="658" cy="620" r="7" fill="#2ff0f8" />
      </g>
    </svg>
  );
}

const dialogButton = "flex items-center justify-center border border-[#c1c3c5] bg-[#f8f8f9]";

function ViewManager() {
  const [tab, setTab] = useState("Simp Rep");
  const tabClass = (name: string) =>
    tab === name ? "bg-[#fbfbfc] text-[#3c4042]" : "bg-[#edeef0] border-b border-r border-[#cfd1d3]";

  return (
    <div role="dialog" aria-label="View Manager" className="absolute right-px -top-px w-[345px] rounded-lg border border-[#9fa1a3] bg-[#edeef0] text-[13px] leading-4 text-[#54585a] shadow-[0_12px_44px_rgba(40,42,50,0.4)] overflow-hidden">
      <div className="h-[30px] relative flex items-center justify-center bg-[#dcdddf] text-[#36393b]">
        View Manager
        <button type="button" aria-label="Close dialog" className="absolute right-[10px] top-[11px]">
          <svg viewBox="0 0 8 8" className="w-2 h-2"><path d="M0 0L8 8M8 0L0 8" stroke="#707476" strokeWidth="2.500" /></svg>
        </button>
      </div>
      <div className="mt-[2px] mx-px border border-b-0 border-[#cfd1d3] bg-[#fbfbfc]">
        <div className="h-[23px] grid grid-cols-[109px_141px_1fr]">
          {["Orient", "Appearance", "All"].map(t => <button key={t} type="button" onClick={() => setTab(t)} className={tabClass(t)}>{t}</button>)}
        </div>
        <div className="h-[23px] grid grid-cols-[121px_116px_1fr]">
          {["Simp Rep", "Sections", "Layers"].map(t => <button key={t} type="button" onClick={() => setTab(t)} className={tabClass(t)}>{t}</button>)}
        </div>

        <div className="flex mt-2 mx-[2px] h-7">
          <button type="button" className="w-[43px] border border-[#86d2f8] bg-[#9edefe]">New</button>
          <button type="button" className={`${dialogButton} ml-[77px] w-[54px] gap-[13px] pl-[5px]`}>Edit<Caret /></button>
          <button type="button" className={`${dialogButton} ml-[3px] w-[98px] gap-3 pl-1`}>
            <span className="flex items-center gap-2"><Icon name="eye" className="w-[14px] h-[14px]" />Options</span><Caret />
          </button>
        </div>

        <div className="mt-[7px] mx-px h-[218px] bg-white border border-[#c1c3c5]">
          <table className="w-full border-collapse text-left">
            <thead>
              <tr className="h-[22px] bg-[#fafafa] border-b border-[#dcdddf]">
                <th className="w-[133px] font-normal text-center text-[#3c4042] border-r border-[#dcdddf]">Names</th>
                <th></th>
              </tr>
            </thead>
            <tbody>
              <tr className="h-[22px]">
                <td className="bg-[#aee3ff] text-[#3c4042] pl-1"><span className="flex items-center gap-[3px]"><Icon name="arrow" className="w-3 h-3" />Master Rep</span></td>
                <td></td>
              </tr>
              <tr className="h-[23px]">
                <td className="pl-[3px]">Automatic Rep</td>
                <td></td>
              </tr>
            </tbody>
          </table>
        </div>
      </div>
      <div className="mx-1 mt-[2px] border-t border-[#d6d8da] py-[3px] flex justify-between">
        <button type="button" className={`${dialogButton} w-[93px] h-6`}>Properties &gt;&gt;</button>
        <button type="button" className={`${dialogButton} w-[49px] h-6`}>Close</button>
      </div>
    </div>
  );
}

export default function App() {
  const [activeTab, setActiveTab] = useState("View");

  return (
    <div className="min-h-screen flex flex-col font-['Lato','Open_Sans',sans-serif] bg-[#f8faf9] border-l border-b-2 border-l-[#3a4144] border-b-[#262626] text-[#45494b]">
      <header className="relative h-7 flex items-center bg-[#d9dfdf] border-t border-t-white">
        <span className="w-[81px] pl-[7px] flex items-center gap-1 text-lg leading-5 font-bold text-[#5b5f61]"><Icon name="part" className="w-4 h-4" />creo<span className="-ml-[3px] text-[8px] leading-3 self-start">•</span></span>
        <div className="flex items-center">
          <ToolButton icon="newDoc" label="New" />
          <ToolButton icon="open" label="Open" />
          <ToolButton icon="save" label="Save" />
          <ToolButton icon="undo" label="Undo" />
          <span className="w-[14px] pl-[3px] flex"><Caret className="text-[#aeb2b2]" /></span>
          <ToolButton icon="redo" label="Redo" />
          <span className="w-3 pl-[3px] flex"><Caret className="text-[#aeb2b2]" /></span>
          <ToolButton icon="regen" label="Regenerate" />
          <ToolButton icon="windows" label="Windows" />
          <span className="w-[15px] pl-[3px] flex"><Caret /></span>
          <ToolButton icon="closeX" label="Close" />
          <ToolButton icon="settings" label="Settings" />
          <span className="w-[13px] pl-[3px] flex"><Caret /></span>
          <Rule />
          <button type="button" aria-label="Customize toolbar" className="ml-2 flex flex-col items-center gap-0.5"><span className="w-2 h-px bg-[#5c6163]"></span><Caret /></button>
        </div>
        <h1 className="absolute inset-x-0 top-1 text-center text-sm leading-5 text-[#b7bcbc] pointer-events-none">DRONE-BODY (Active) - Creo Parametric</h1>
        <div className="ml-auto mr-[10px] flex items-center gap-4 text-[#b4b9b9]">
          <button type="button" aria-label="Minimize"><svg viewBox="0 0 10 10" className="w-[10px] h-[10px]"><path d="M0 8H10" stroke="currentColor" strokeWidth="1.500" /></svg></button>
          <button type="button" aria-label="Restore"><svg viewBox="0 0 11 10" className="w-[11px] h-[10px]"><path d="M0.500 4.500H7V9H0.500ZM3 4V1H10.500V6H7.500" fill="none" stroke="currentColor" /></svg></button>
          <button type="button" aria-label="Close window"><svg viewBox="0 0 10 10" className="w-[10px] h-[10px]"><path d="M1 1L9 9M9 1L1 9" stroke="currentColor" strokeWidth="1.500" /></svg></button>
        </div>
      </header>

      <nav className="h-7 flex bg-[#3f4649] text-sm text-[#f0f2f3]">
        {tabs.map(([name, width]) => (
          <button
            key={name}
            type="button"
            onClick={() => setActiveTab(name)}
            className={`pt-px ${width} ${name === "File" ? "bg-linear-to-b from-[#5fcf3c] to-[#55a838]" : ""} ${activeTab === name && name !== "File" ? "bg-[#f8f9fb] text-[#4c8c2b]" : ""}`}
          >
            {name}
          </button>
        ))}
        <div className="ml-auto mr-2 flex items-center gap-3 text-white">
          <button type="button" aria-label="Minimize ribbon" className="mb-1"><svg viewBox="0 0 12 8" className="w-3 h-2"><path d="M1 7L6 1L11 7L6 4.500Z" fill="currentColor" stroke="currentColor" /></svg></button>
          <button type="button" aria-label="Search"><svg viewBox="0 0 10 10" className="w-[10px] h-[10px]"><circle cx="6" cy="4" r="3" fill="none" stroke="currentColor" strokeWidth="1.500" /><path d="M4 6L0.500 9.500" stroke="currentColor" strokeWidth="2" /></svg></button>
          <button type="button" aria-label="Learning" className="flex items-center gap-[9px]">
            <svg viewBox="0 0 12 10" className="w-3 h-[10px]"><path d="M6 0L12 3L6 6L0 3ZM2.500 5.500L6 7.500L9.500 5.500V8Q6 11 2.500 8ZM0.500 3V8" fill="currentColor" stroke="currentColor" strokeWidth="0.500" /></svg>
            <Caret className="text-white" />
          </button>
          <button type="button" aria-label="Help" className="font-bold">?</button>
        </div>
      </nav>

      <div className="h-[109px] flex bg-[#f8f9fb] border-b border-[#c3d5d2] text-xs">
        <Group label="Visibility" width="w-[119px]" caret={false}>
          <BigButton icon="layerTree" lines={["Layer", "Tree"]} width="w-[46px]" />
          <div className="flex flex-col -mt-px">
            <SmallButton icon="eyeOff" label="Hide" disabled />
            <SmallButton icon="eye" label="Show" disabled caret darkCaret />
            <SmallButton icon="status" label="Status" disabled caret />
          </div>
        </Group>
        <Group label="Appearance" width="w-[127px]">
          <BigButton icon="scenes" lines={["Scenes"]} width="w-[46px] ml-px" caret />
          <BigButton icon="ball" lines={["Appearances"]} width="w-[76px]" caret />
        </Group>
        <Group label="Orientation" width="w-[443px]">
          <BigButton icon="refit" lines={["Refit"]} width="w-[42px]" />
          <BigButton icon="zoomSel" lines={["Zoom to", "Selected"]} width="w-[54px]" disabled />
          <BigButton icon="zoomIn" lines={["Zoom In"]} width="w-[54px]" />
          <div className="w-[85px] border-r border-[#c9cbcd] pl-[3px]">
            <div className="-mt-px flex flex-col">
              <SmallButton icon="hand" label="Pan" />
              <SmallButton icon="zoomOut" label="Zoom Out" />
              <SmallButton icon="panZoom" label="Pan Zoom" />
            </div>
          </div>
          <BigButton icon="saved" lines={["Saved", "Orientations"]} width="w-[86px]" caret />
          <BigButton icon="standard" lines={["Standard", "Orientation"]} width="w-16" />
          <BigButton icon="previous" lines={["Previous"]} width="w-14" />
        </Group>
        <Group label="Model Display" width="w-[218px]">
          <BigButton icon="sectionBig" lines={["Section"]} width="w-[50px]" caret disabled />
          <BigButton icon="manage" lines={["Manage", "Views"]} width="w-[50px]" caret />
          <BigButton icon="display" lines={["Display", "Style"]} width="w-12" caret />
          <BigButton icon="perspBig" lines={["Perspective", "View"]} width="w-[67px]" active>
            <svg viewBox="0 0 12 18" className="absolute left-[10px] top-[59px] w-3 h-[18px]" aria-hidden="true">
              <path d="M1 1V14L4 11L6 17L9 16L7 10.500H11Z" fill="#fff" stroke="#222" />
            </svg>
          </BigButton>
        </Group>
        <Group label="Show" width="w-[163px]">
          <div className="pl-[2px] pt-2 flex flex-col gap-[17px]">
            <div className="flex">
              {showTop.map(([icon, label, active]) => <ToolButton key={label} icon={icon} label={label} active={active} badge="eye" />)}
            </div>
            <div className="flex items-center">
              {showBottom.map(([icon, label, active], i) => <ToolButton key={label} icon={icon} label={label} active={active} badge={i < 4 ? "tag" : undefined} />)}
              <button type="button" aria-label="More sections" className="ml-[3px] flex"><Caret /></button>
            </div>
          </div>
        </Group>
        <Group label="Window" width="w-[159px]">
          <BigButton icon="activate" lines={["Activate"]} width="w-[54px] ml-px" />
          <div className="w-[42px] border-r border-[#c9cbcd]"><BigButton icon="closeBig" lines={["Close"]} width="w-[38px]" /></div>
          <BigButton icon="windowsBig" lines={["Windows"]} width="w-[58px] ml-[2px]" caret />
        </Group>
      </div>

      <div className="flex-1 flex">
        <ModelTree />
        <main className="relative flex-1 min-w-0 bg-[#e8e9ed]">
          <Drone />

          <div className="absolute left-[580px] top-[6px] w-[389px] h-[30px] px-px grid grid-cols-15 items-center justify-items-center bg-[#f8f9fb] border border-[#b9bcbe]">
            {graphicTools.map(([icon, label]) => (
              <ToolButton key={label} icon={icon} label={label} active={icon === "rotor"} badge={icon === "note" ? "eye" : undefined} menu={withMenu.includes(icon)} />
            ))}
          </div>

          <div role="tooltip" className="absolute left-[367px] top-px w-[158px] h-[62px] pl-3 pt-[11px] bg-white border border-[#bfe0f0] shadow-[2px_2px_1px_rgba(90,92,96,0.7)] text-[13px] leading-4 text-[#505456]">
            <div className="flex items-center gap-[6px] font-bold text-[#26292b]"><Icon name="viewMgr" />View Manager</div>
            <p className="mt-[7px] text-xs leading-4 whitespace-nowrap">Open the View Manager.</p>
          </div>

          <ViewManager />
        </main>
      </div>

      <footer className="h-[30px] flex items-center pt-[3px] border-t border-[#c8d9dc] bg-[#f8faf9]">
        <span className="ml-1"><ToolButton icon="layoutBtn" label="Navigator" active badge="eye" /></span>
        <ToolButton icon="globe" label="Browser" />
        <ToolButton icon="blank" label="Full screen" />
        <span className="w-[7px]"></span>
        <Rule />
        <div className="ml-auto mr-4 flex items-center">
          <Rule />
          <span className="w-[3px]"></span>
          <Rule />
          <span className="w-[2px]"></span>
          <ToolButton icon="find" label="Find" />
          <span className="w-[2px]"></span>
          <Caret />
          <span className="w-[6px]"></span>
          <Rule />
          <ToolButton icon="marquee" label="Box select" />
          <span className="w-1"></span>
          <Caret />
          <span className="w-[6px]"></span>
          <ToolButton icon="pick" label="Pick filter" />
          <div className="relative ml-[94px]">
            <select aria-label="Selection filter" className="block appearance-none w-[174px] h-[23px] pl-[6px] text-[13px] text-[#54585a] bg-[#f8faf9] border border-[#b9bcbe]">
              <option>Geometry</option>
              <option>Features</option>
            </select>
            <span className="absolute right-px top-px h-[21px] w-[15px] border-l border-[#b9bcbe] flex items-center justify-center pointer-events-none"><Caret /></span>
          </div>
        </div>
      </footer>
    </div>
  );
}
